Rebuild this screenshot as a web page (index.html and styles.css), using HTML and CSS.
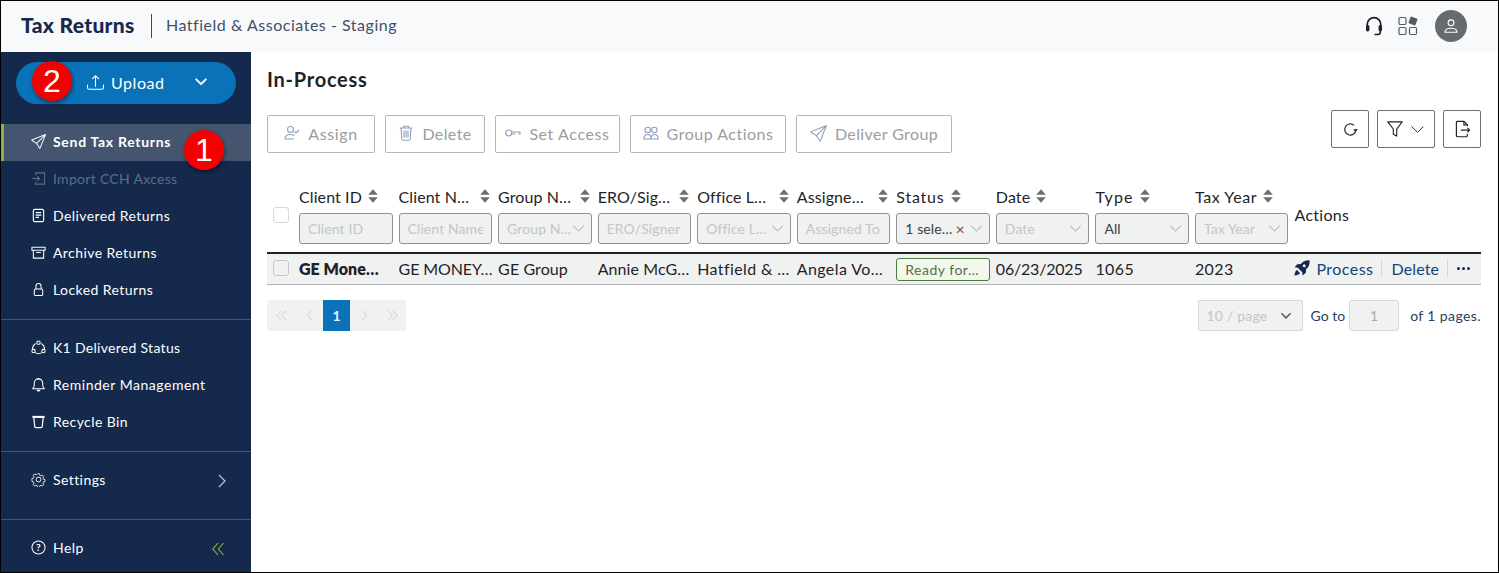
FILE: index.html
```html
<!DOCTYPE html>
<html lang="en">
<head>
<meta charset="utf-8">
<title>Tax Returns</title>
<link rel="stylesheet" href="styles.css">
</head>
<body>
<svg class="defs" width="0" height="0" aria-hidden="true">
  <symbol id="i-send" viewBox="0 0 16 16"><path fill="currentColor" d="M15.854.146a.5.5 0 0 1 .11.54l-5.819 14.547a.75.75 0 0 1-1.329.124l-3.178-4.995L.643 7.184a.75.75 0 0 1 .124-1.33L15.314.037a.5.5 0 0 1 .54.11ZM6.636 10.07l2.761 4.338L14.13 2.576zm6.787-8.201L1.591 6.602l4.339 2.76z"/></symbol>
  <symbol id="i-sort" viewBox="0 0 10 14"><path fill="currentColor" d="M5 .2 9.800 5.800H.2zM5 13.800.2 8.200h9.600z"/></symbol>
  <symbol id="i-down" viewBox="0 0 16 16"><path fill="none" stroke="currentColor" stroke-width="1" stroke-linecap="round" stroke-linejoin="round" d="M2 5.2 8 11l6-5.8"/></symbol>
</svg>
<div class="frame">
  <header class="topbar">
    <span class="brand">Tax Returns</span>
    <span class="brand-sep"></span>
    <span class="company">Hatfield &amp; Associates - Staging</span>
    <div class="top-icons">
      <svg class="ti-head" viewBox="0 0 18 20"><path fill="none" stroke="#1c1f24" stroke-width="1.7" d="M2.2 10V8.500a6.800 6.800 0 0 1 13.600 0V10"/><rect x="1" y="9" width="3.400" height="6.400" rx="1.600" fill="#1c1f24"/><rect x="13.600" y="9" width="3.400" height="6.400" rx="1.600" fill="#1c1f24"/><path fill="none" stroke="#1c1f24" stroke-width="1.500" d="M15.300 15v1.200c0 1.300-1.200 2.200-2.500 2.200H9.500"/></svg>
      <svg class="ti-apps" viewBox="0 0 20 20"><g fill="none" stroke="#555b62" stroke-width="1.200"><rect x="1" y="1.500" width="7" height="7" rx="1.200"/><rect x="1" y="11.500" width="7" height="7" rx="1.200"/><rect x="11.500" y="11.500" width="7" height="7" rx="1.200"/></g><rect x="11.300" y="1.300" width="7.400" height="7.400" rx="1.200" fill="#555b62" transform="rotate(20 15 5)"/></svg>
      <span class="avatar"><svg viewBox="0 0 16 16"><g fill="none" stroke="#fff" stroke-width="1.100"><circle cx="8" cy="4.800" r="2.900"/><path d="M2 14.200c0-2.800 2.600-4 6-4s6 1.200 6 4z" stroke-linejoin="round"/></g></svg></span>
    </div>
  </header>
  <div class="body">
    <aside class="sidebar">
      <div class="upload-wrap">
        <button class="upload" type="button">
          <svg class="up-icon" viewBox="0 0 16 16"><path fill="currentColor" d="M.5 9.900a.5.500 0 0 1 .5.500v2.500a1 1 0 0 0 1 1h12a1 1 0 0 0 1-1v-2.500a.5.500 0 0 1 1 0v2.500a2 2 0 0 1-2 2H2a2 2 0 0 1-2-2v-2.500a.5.500 0 0 1 .5-.5z"/><path fill="currentColor" d="M7.646 1.146a.5.500 0 0 1 .708 0l3 3a.5.500 0 0 1-.708.708L8.500 2.707V11.500a.5.500 0 0 1-1 0V2.707L5.354 4.854a.5.500 0 1 1-.708-.708l3-3z"/></svg>
          <span>Upload</span>
          <svg class="up-caret" viewBox="0 0 16 16"><path fill="none" stroke="currentColor" stroke-width="2.200" stroke-linecap="round" stroke-linejoin="round" d="M2.500 5 8 10.500 13.500 5"/></svg>
        </button>
        <span class="badge badge-2">2</span>
      </div>
      <nav class="nav nav-first">
        <a class="nav-item active"><svg class="n-icon" viewBox="0 0 16 16"><use href="#i-send"/></svg><span>Send Tax Returns</span><span class="badge badge-1">1</span></a>
        <a class="nav-item disabled"><svg class="n-icon" viewBox="0 0 16 16"><g fill="none" stroke="currentColor" stroke-width="1.100"><path d="M5 4.500V2h9.500v12H5v-2.500"/><path d="M1 8h8M6.500 5.500 9.200 8 6.500 10.500"/></g></svg><span>Import CCH Axcess</span></a>
        <a class="nav-item"><svg class="n-icon" viewBox="0 0 16 16"><g fill="none" stroke="currentColor"><rect x="2.500" y="1.500" width="11" height="13" rx="1.500" stroke-width="1.200"/><path d="M5 5h6M5 7.500h6M5 10h3.500" stroke-width="1.300"/></g></svg><span>Delivered Returns</span></a>
        <a class="nav-item"><svg class="n-icon" viewBox="0 0 16 16"><g fill="none" stroke="currentColor" stroke-width="1.100"><path d="M1 2.500h14v3H1zM2.500 5.500v8.500h11V5.500M5.500 8h5"/></g></svg><span>Archive Returns</span></a>
        <a class="nav-item"><svg class="n-icon" viewBox="0 0 16 16"><g fill="none" stroke="currentColor" stroke-width="1.100"><rect x="3.500" y="7.500" width="9" height="7" rx="1.500"/><path d="M5.300 7.500V4.300a2.700 2.700 0 0 1 5.400 0v3.200"/></g></svg><span>Locked Returns</span></a>
      </nav>
      <nav class="nav nav-group">
        <a class="nav-item k1"><svg class="n-icon" viewBox="0 0 16 16"><g fill="none" stroke="currentColor" stroke-width="1.100"><circle cx="8" cy="2.800" r="1.800"/><circle cx="2.700" cy="11.800" r="1.800"/><circle cx="13.300" cy="11.800" r="1.800"/><path d="M5 3.800C3 5 1.600 7 1.600 10M11 3.800c2 1.200 3.400 3.200 3.400 6.200M4.500 13.500c2 1.300 5 1.300 7 0"/></g></svg><span>K1 Delivered Status</span></a>
        <a class="nav-item reminder"><svg class="n-icon" viewBox="0 0 16 16"><g fill="none" stroke="currentColor" stroke-width="1.100"><path d="M1.800 12.500c1.200-1 1.700-2 1.700-3.700V6.500a4.500 4.500 0 0 1 9 0v2.300c0 1.700.5 2.700 1.700 3.700z" stroke-linejoin="round"/></g><path fill="currentColor" d="M6 13.500h4a2 2 0 0 1-4 0zM7.200 1h1.600v1.500H7.200z"/></svg><span>Reminder Management</span></a>
        <a class="nav-item"><svg class="n-icon" viewBox="0 0 16 16"><path fill="currentColor" d="M1.500 2h13v2.200h-13z"/><path fill="none" stroke="currentColor" stroke-width="1.300" d="M3 4l1 9.500c.1.700.5 1 1.200 1h5.600c.7 0 1.100-.3 1.200-1L13 4"/></svg><span>Recycle Bin</span></a>
      </nav>
      <nav class="nav nav-settings">
        <a class="nav-item"><svg class="n-icon" viewBox="0 0 16 16"><g fill="none" stroke="currentColor" stroke-width="1"><circle cx="8" cy="8" r="2.600"/><path stroke-linejoin="round" d="M6.800 1h2.400l.4 2 1.500.7 1.800-1 1.600 1.800-1.100 1.700.6 1.500 2 .4v2.400l-2 .4-.6 1.500 1.100 1.700-1.600 1.800-1.800-1-1.500.7-.4 2H6.800l-.4-2-1.500-.7-1.800 1-1.600-1.800 1.100-1.700-.6-1.500-2-.4V6.600l2-.4.6-1.500L1.500 3l1.600-1.800 1.800 1 1.500-.7z" transform="translate(1 1) scale(.875)"/></g></svg><span>Settings</span><svg class="n-right" viewBox="0 0 8 14"><path fill="none" stroke="currentColor" stroke-width="1.100" d="M1 1l6 6-6 6"/></svg></a>
      </nav>
      <nav class="nav nav-help">
        <a class="nav-item"><svg class="n-icon" viewBox="0 0 16 16"><circle cx="8" cy="8" r="7" fill="none" stroke="currentColor" stroke-width="1.100"/><text class="q-mark" x="8" y="11.800" text-anchor="middle">?</text></svg><span>Help</span><svg class="n-collapse" viewBox="0 0 12 14"><path fill="none" stroke="#8ab44a" stroke-width="1.100" d="M6 1 .8 7 6 13M11.500 1 6.300 7l5.200 6"/></svg></a>
      </nav>
    </aside>
    <main class="main">
      <h1 class="title">In-Process</h1>
      <div class="toolbar">
        <div class="actions">
          <button class="btn b-assign" type="button"><svg class="b-icon" viewBox="0 0 16 16"><g fill="none" stroke="#8ea2bb" stroke-width="1.100"><circle cx="6.500" cy="4.500" r="3"/><path d="M1 14c0-3 2.500-4.500 5.500-4.500 1.500 0 3 .5 4 1.300M1 14h9"/><path d="M10.500 6.500 12 8l3-3"/></g></svg>Assign</button>
          <button class="btn b-delete" type="button"><svg class="b-icon" viewBox="0 0 16 16"><g fill="none" stroke="#8ea2bb" stroke-width="1.100"><path d="M1.500 3h13M5.500 3V1.200h5V3M3 3l.8 11c.1.700.5 1.200 1.200 1.200h6c.7 0 1.100-.5 1.200-1.200L13 3M6 5.500v7M8 5.500v7M10 5.500v7"/></g></svg>Delete</button>
          <button class="btn b-access" type="button"><svg class="b-icon" viewBox="0 0 16 16"><g fill="none" stroke="#8ea2bb" stroke-width="1.100"><circle cx="3.700" cy="8" r="3"/><path d="M6.700 7h8.300v2h-1.500M10.500 9h-3.800"/></g></svg>Set Access</button>
          <button class="btn b-group" type="button"><svg class="b-icon" viewBox="0 0 16 16"><g fill="none" stroke="#8ea2bb" stroke-width="1.100"><circle cx="4.700" cy="5" r="2.700"/><circle cx="11.300" cy="5" r="2.700"/><path d="M.8 14c0-3 1.500-4.500 3.900-4.500S8 11 8 14zM8 14c0-3 1-4.500 3.300-4.500s3.900 1.500 3.900 4.500z"/></g></svg>Group Actions</button>
          <button class="btn b-deliver" type="button"><svg class="b-icon b-plane" viewBox="0 0 16 16"><use href="#i-send"/></svg>Deliver Group</button>
        </div>
        <div class="tools">
          <button class="tool t-refresh" type="button"><svg viewBox="0 0 14 14"><path fill="none" stroke="#1f2328" stroke-width="1.100" d="M12 7.500a5.200 5.200 0 1 1-1.700-4.400"/><path fill="#1f2328" d="M13.800 6.500 11.900 9.300 9.400 7z"/></svg></button>
          <button class="tool t-filter" type="button"><svg class="f-icon" viewBox="0 0 14 14"><path fill="none" stroke="#1f2328" stroke-width="1" stroke-linejoin="round" d="M.7.8h12.600L8.500 7v6.200l-3-1.700V7z"/></svg><svg class="f-down" viewBox="0 0 16 16"><use href="#i-down"/></svg></button>
          <button class="tool t-export" type="button"><svg viewBox="0 0 14 16"><path fill="none" stroke="#1f2328" stroke-width="1.100" stroke-linejoin="round" d="M11.500 5.500V4L8.500.8H2.500c-.8 0-1.200.4-1.200 1.200v12c0 .8.400 1.200 1.200 1.200h7.800c.8 0 1.200-.4 1.200-1.200v-1.500"/><path fill="none" stroke="#1f2328" stroke-width="1.100" d="M8.300.8v3.400h3.200M5.500 9h8M11.600 7l2 2-2 2"/></svg></button>
        </div>
      </div>
      <table class="grid">
        <colgroup><col class="c-check"><col class="c-col" span="10"><col class="c-act"></colgroup>
        <thead>
          <tr>
            <th class="th-check"><span class="check"></span></th>
            <th><div class="h-label"><span>Client ID</span><svg class="sort s-near" viewBox="0 0 10 14"><use href="#i-sort"/></svg></div><div class="f-box placeholder"><span class="clip">Client ID</span></div></th>
            <th><div class="h-label"><span>Client N…</span><svg class="sort" viewBox="0 0 10 14"><use href="#i-sort"/></svg></div><div class="f-box placeholder"><span class="clip">Client Name</span></div></th>
            <th><div class="h-label"><span>Group N…</span><svg class="sort" viewBox="0 0 10 14"><use href="#i-sort"/></svg></div><div class="f-box placeholder sel"><span>Group N…</span><svg class="dn" viewBox="0 0 16 16"><use href="#i-down"/></svg></div></th>
            <th><div class="h-label"><span>ERO/Sig…</span><svg class="sort" viewBox="0 0 10 14"><use href="#i-sort"/></svg></div><div class="f-box placeholder"><span class="clip">ERO/Signer</span></div></th>
            <th><div class="h-label"><span>Office L…</span><svg class="sort" viewBox="0 0 10 14"><use href="#i-sort"/></svg></div><div class="f-box placeholder sel"><span>Office L…</span><svg class="dn" viewBox="0 0 16 16"><use href="#i-down"/></svg></div></th>
            <th><div class="h-label"><span>Assigne…</span><svg class="sort" viewBox="0 0 10 14"><use href="#i-sort"/></svg></div><div class="f-box placeholder"><span class="clip">Assigned To</span></div></th>
            <th><div class="h-label h-status"><span>Status</span><svg class="sort s-near" viewBox="0 0 10 14"><use href="#i-sort"/></svg></div><div class="f-box sel status-box"><span>1 sele…</span><span class="x">×</span><svg class="dn" viewBox="0 0 16 16"><use href="#i-down"/></svg></div></th>
            <th><div class="h-label"><span>Date</span><svg class="sort s-near" viewBox="0 0 10 14"><use href="#i-sort"/></svg></div><div class="f-box placeholder sel"><span>Date</span><svg class="dn" viewBox="0 0 16 16"><use href="#i-down"/></svg></div></th>
            <th><div class="h-label h-type"><span>Type</span><svg class="sort s-near" viewBox="0 0 10 14"><use href="#i-sort"/></svg></div><div class="f-box sel"><span>All</span><svg class="dn" viewBox="0 0 16 16"><use href="#i-down"/></svg></div></th>
            <th><div class="h-label h-tax"><span>Tax Year</span><svg class="sort s-near" viewBox="0 0 10 14"><use href="#i-sort"/></svg></div><div class="f-box placeholder sel"><span>Tax Year</span><svg class="dn" viewBox="0 0 16 16"><use href="#i-down"/></svg></div></th>
            <th class="th-act">Actions</th>
          </tr>
        </thead>
        <tbody>
          <tr>
            <td class="td-check"><span class="check"></span></td>
            <td class="strong">GE Mone…</td>
            <td class="tight">GE MONEY…</td>
            <td class="snug">GE Group</td>
            <td class="snug">Annie McG…</td>
            <td>Hatfield &amp; …</td>
            <td>Angela Vo…</td>
            <td class="td-pill"><span class="pill">Ready for…</span></td>
            <td class="date">06/23/2025</td>
            <td>1065</td>
            <td>2023</td>
            <td class="td-act"><div class="row-actions">
              <svg class="rocket" viewBox="0 0 16 16"><path fill="#14294b" d="M15.600.4c-3.600-.3-6.500.9-8.700 3.500L3.300 4.200.6 7.300l3.200.5 4.400 4.400.5 3.200 3.100-2.700.3-3.600c2.600-2.200 3.800-5.100 3.500-8.700zM10.200 7.200a1.500 1.500 0 1 1 0-3 1.500 1.500 0 0 1 0 3z"/><path fill="#14294b" d="M3 10c-1.300.5-2.200 2-2.500 5.500C4 15.200 5.500 14.300 6 13z"/></svg>
              <a class="act">Process</a><span class="act-sep"></span><a class="act act-del">Delete</a><span class="act-sep"></span><span class="more"><i></i><i></i><i></i></span>
            </div></td>
          </tr>
        </tbody>
      </table>
      <div class="pager">
        <div class="pages">
          <span class="pg"><svg viewBox="0 0 12 12"><path d="M6 1 1 6l5 5M11 1 6 6l5 5"/></svg></span>
          <span class="pg"><svg viewBox="0 0 12 12"><path d="M8.500 1l-5 5 5 5"/></svg></span>
          <span class="pg current">1</span>
          <span class="pg"><svg viewBox="0 0 12 12"><path d="M3.500 1l5 5-5 5"/></svg></span>
          <span class="pg"><svg viewBox="0 0 12 12"><path d="M1 1l5 5-5 5M6 1l5 5-5 5"/></svg></span>
        </div>
        <div class="pager-right">
          <div class="per-page"><span>10 / page</span><svg viewBox="0 0 16 16"><path fill="none" stroke="#555b62" stroke-width="2" stroke-linecap="round" stroke-linejoin="round" d="M2.500 5 8 10.500 13.500 5"/></svg></div>
          <span class="goto">Go to</span>
          <div class="page-input">1</div>
          <span class="of">of 1 pages.</span>
        </div>
      </div>
    </main>
  </div>
</div>
</body>
</html>
```
FILE: styles.css
```css
* { box-sizing: border-box; }
html, body { margin: 0; padding: 0; }
body { font-family: Lato, "Noto Sans", sans-serif; color: #1f2328; background: #fff; width: 1499px; height: 573px; overflow: hidden; }
.defs { position: absolute; }
.frame { width: 1499px; height: 573px; border: 1px solid #000; display: flex; flex-direction: column; }
.topbar { height: 51px; flex: none; background: #f8f9fb; display: flex; align-items: center; padding: 0 0 2px 20px; }
.brand { font-size: 21px; font-weight: 900; color: #14294b; letter-spacing: .3px; width: 130px; white-space: nowrap; margin-bottom: 2px; }
.brand-sep { width: 1px; height: 24px; background: #3a4a63; }
.company { font-size: 16px; color: #3f5068; margin: 0 0 2px 14px; letter-spacing: .52px; white-space: nowrap; }
.top-icons { margin-left: auto; display: flex; align-items: center; padding-right: 31px; }
.ti-head { width: 18px; height: 20px; margin-right: 15px; }
.ti-apps { width: 20px; height: 20px; margin-right: 17px; }
.avatar { width: 32px; height: 32px; border-radius: 50%; background: #666b6e; display: flex; align-items: center; justify-content: center; }
.avatar svg { width: 16px; height: 16px; }
.body { flex: 1; display: flex; min-height: 0; }
.sidebar { width: 250px; flex: none; background: #14294b; color: #fff; display: flex; flex-direction: column; }
.upload-wrap { position: relative; padding: 10px 15px 0; height: 72px; flex: none; }
.upload { width: 220px; height: 42px; border: 0; border-radius: 21px; background: #0a72b8; color: #fff; font: inherit; font-size: 16px; letter-spacing: .55px; display: flex; align-items: center; padding: 0 28px 2px 71px; }
.up-icon { width: 17px; height: 17px; margin-right: 7px; }
.up-caret { width: 14px; height: 14px; margin-left: auto; }
.badge { position: absolute; width: 40px; height: 40px; border-radius: 50%; background: #f40000; color: #fff; font-family: "Liberation Sans", sans-serif; font-size: 32px; line-height: 40px; text-align: center; letter-spacing: 0; font-weight: 400; box-shadow: 1px 2px 4px rgba(0, 0, 0, .45); }
.badge-2 { left: 31px; top: 9px; }
.badge-1 { left: 183px; top: 6px; }
.nav { display: flex; flex-direction: column; }
.nav-group, .nav-settings, .nav-help { border-top: 1px solid #47566f; padding-top: 10px; }
.nav-first { padding-bottom: 10px; }
.nav-group { padding-bottom: 10px; }
.nav-settings { padding-bottom: 20px; height: 68px; }
.nav-help { flex: 1; }
.nav-item { position: relative; display: flex; align-items: center; height: 37px; padding: 0 0 2px 30px; font-size: 14px; letter-spacing: .42px; color: #fff; white-space: nowrap; }
.nav-item.active { background: #46556f; box-shadow: inset 3px 0 0 #8ab44a; font-weight: 700; letter-spacing: .7px; }
.nav-item.disabled { color: #5e6d86; letter-spacing: .3px; }
.k1 { letter-spacing: .3px; }
.reminder { letter-spacing: .52px; }
.n-icon { width: 15px; height: 15px; margin-right: 7px; flex: none; color: #fff; }
.disabled .n-icon { color: #5e6d86; }
.q-mark { font: 700 11px Lato, sans-serif; fill: currentColor; }
.n-right { width: 8px; height: 14px; position: absolute; left: 217px; top: 12px; color: #c9ced6; }
.n-collapse { width: 12px; height: 14px; position: absolute; left: 211px; top: 12px; }
.main { flex: 1; padding: 0 17px 0 16px; min-width: 0; }
.title { font-size: 20px; font-weight: 700; margin: 0; height: 58px; line-height: 55px; letter-spacing: .75px; color: #1f2328; }
.toolbar { display: flex; justify-content: space-between; align-items: flex-start; height: 75px; }
.actions { display: flex; gap: 10px; padding-top: 5px; }
.btn { height: 38px; background: #fff; border: 1px solid #b4b7ba; border-radius: 2px; color: #9b9d9f; font: inherit; font-size: 16px; letter-spacing: .6px; display: flex; align-items: center; justify-content: center; padding: 0 0 2px; white-space: nowrap; }
.b-icon { width: 16px; height: 16px; margin-right: 8px; }
.b-plane { color: #8ea2bb; width: 17px; height: 17px; }
.b-assign { width: 108px; }
.b-delete { width: 100px; letter-spacing: .4px; }
.b-access { width: 125px; }
.b-group { width: 156px; letter-spacing: .5px; }
.b-deliver { width: 156px; letter-spacing: .38px; }
.tools { display: flex; gap: 8px; }
.tool { width: 38px; height: 38px; background: #fff; border: 1px solid #6b7075; border-radius: 2px; display: flex; align-items: center; justify-content: center; padding: 0; }
.t-refresh svg { width: 15px; height: 15px; }
.t-filter { width: 58px; gap: 7px; }
.f-icon { width: 16px; height: 16px; }
.f-down { width: 15px; height: 15px; color: #1f2328; }
.t-export svg { width: 15px; height: 18px; }
.grid { width: 1214px; border-collapse: separate; border-spacing: 0; table-layout: fixed; font-size: 16px; }
.c-check { width: 32px; }
.c-col { width: 99.55px; }
.c-act { width: 186.5px; }
th { padding: 0 6px 8px 0; font-weight: 400; text-align: left; vertical-align: top; border-bottom: 2px solid #1f2328; }
.th-check { padding: 0 0 8px 6px; vertical-align: middle; }
.th-act { vertical-align: middle; padding: 0 0 8px; letter-spacing: .3px; }
.h-label { display: flex; align-items: center; justify-content: space-between; height: 22px; margin-bottom: 6px; letter-spacing: .1px; white-space: nowrap; }
.h-status { letter-spacing: .8px; }
.h-type { letter-spacing: 1.1px; }
.h-tax { letter-spacing: .6px; }
.sort { width: 10px; height: 14px; color: #6b7075; margin-right: 2px; flex: none; }
.s-near { margin-left: 6px; margin-right: auto; }
.f-box { height: 31px; border: 1px solid #8e9195; border-radius: 3px; background: #f0f1f1; font-size: 14px; letter-spacing: .1px; display: flex; align-items: center; padding: 0 8px; white-space: nowrap; overflow: hidden; color: #3a3f45; }
.clip { display: block; overflow: hidden; }
.placeholder { color: #c4c6c8; }
.sel { justify-content: space-between; padding-right: 6px; }
.dn { width: 13px; height: 13px; color: #8a8d91; flex: none; }
.status-box .x { color: #8f4a44; font-size: 16px; margin-left: auto; margin-right: 5px; }
.check { display: block; width: 16px; height: 16px; border: 1px solid #d6d8da; border-radius: 3px; background: #fff; }
td { height: 31px; padding: 0 6px 2px 0; background: #f0f1f1; border-bottom: 1px solid #aeb0b3; white-space: nowrap; letter-spacing: .4px; color: #1f2328; overflow: hidden; }
.td-check { padding-left: 6px; }
.td-check .check { background: #f0f1f1; border-color: #c4c6c8; }
.strong { font-weight: 800; letter-spacing: .05px; }
.tight { letter-spacing: -.1px; }
.snug { letter-spacing: .1px; }
.date { letter-spacing: -.2px; }
.td-pill { padding-bottom: 0; }
.pill { display: flex; height: 23px; align-items: center; padding-left: 8px; border: 1px solid #4e7a3a; border-radius: 3px; background: #f3f8ef; color: #55703a; font-size: 14px; letter-spacing: .5px; }
.row-actions { display: flex; align-items: center; color: #0f3a66; }
.rocket { width: 16px; height: 16px; margin-right: 6px; }
.act { color: #14437a; letter-spacing: .45px; }
.act-del { letter-spacing: .15px; margin-left: 1px; }
.act-sep { width: 1px; height: 17px; background: #d3d5d7; margin: 0 8px; }
.more { display: flex; gap: 2px; margin-left: 1px; }
.more i { width: 3px; height: 3px; border-radius: 50%; background: #14294b; display: block; }
.pager { display: flex; justify-content: space-between; margin-top: 15px; height: 31px; }
.pages { display: flex; height: 31px; background: #f0f1f1; border-radius: 3px; overflow: hidden; width: 139px; }
.pg { width: 28px; display: flex; align-items: center; justify-content: center; font-size: 14px; font-weight: 700; }
.pg svg { width: 11px; height: 11px; fill: none; stroke: #c9cbcd; stroke-width: 1; }
.current { background: #0a72b8; color: #e8f3fb; width: 27px; }
.pager-right { display: flex; align-items: center; font-size: 14px; letter-spacing: .3px; color: #2a4060; }
.per-page { width: 105px; height: 31px; border: 1px solid #d6d8da; border-radius: 2px; background: #f0f1f1; color: #c4c6c8; display: flex; align-items: center; justify-content: space-between; padding: 0 10px 0 8px; letter-spacing: .2px; }
.per-page svg { width: 12px; height: 12px; }
.goto { margin-left: 8px; letter-spacing: 0; }
.page-input { width: 50px; height: 31px; border: 1px solid #d6d8da; border-radius: 3px; background: #f0f1f1; color: #a9abad; text-align: center; line-height: 29px; margin: 0 11px 0 4px; }
.of { letter-spacing: .4px; }
```
